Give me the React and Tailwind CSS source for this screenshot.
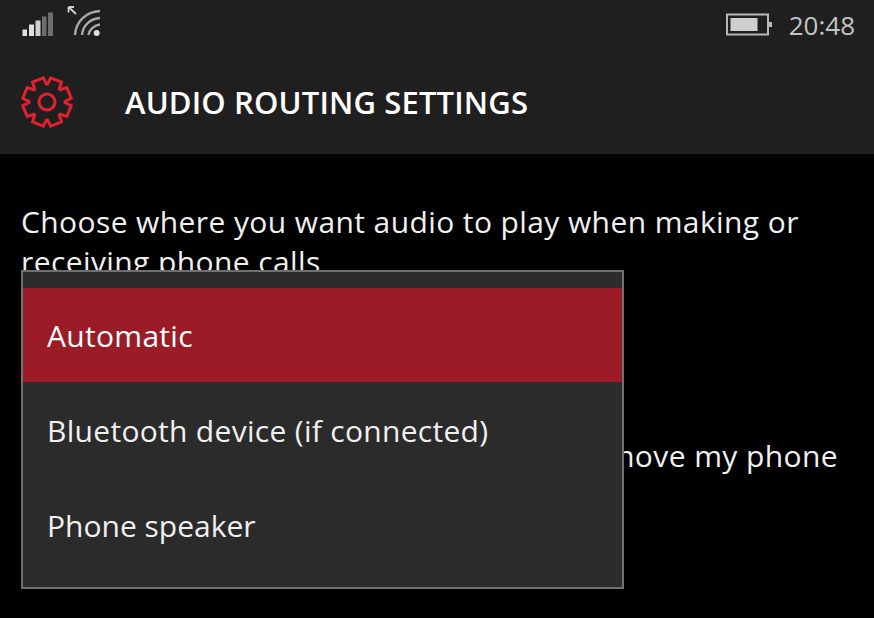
const font = { fontFamily: '"Open Sans", "Noto Sans", sans-serif' };

function SignalIcon() {
  return (
    <svg width="32" height="26" viewBox="0 0 32 26">
      <rect x="0.5" y="17.5" width="4.5" height="6.5" fill="#e0e0e0" />
      <rect x="7" y="12.5" width="5" height="11.5" fill="#e0e0e0" />
      <rect x="13.5" y="8.5" width="5" height="15.5" fill="#cfcfcf" />
      <rect x="20" y="4.5" width="4.5" height="19.5" fill="#6e6e6e" />
      <rect x="26" y="0.5" width="5" height="23.5" fill="#6e6e6e" />
    </svg>
  );
}

function WifiIcon() {
  return (
    <svg width="38" height="34" viewBox="0 0 38 34" fill="none" stroke="#a8a8a8" strokeWidth="2.4">
      <path d="M2.5 2l7.5 7M2.5 2h5.5M2.5 2v5.5" stroke="#d0d0d0" strokeWidth="1.8" />
      <path d="M9 30C10 16 20 7 34 6" />
      <path d="M16 30C16.5 21 24 13.5 34 13" />
      <path d="M22.5 30C23 25 28 20 34 19.5" />
      <circle cx="30.7" cy="28" r="3" fill="#e0e0e0" stroke="none" />
    </svg>
  );
}

function BatteryIcon() {
  return (
    <svg width="46" height="24" viewBox="0 0 46 24" fill="none">
      <rect x="1" y="1.5" width="41" height="20" stroke="#b8b8b8" strokeWidth="2" />
      <rect x="4.5" y="5" width="27" height="13" fill="#cfcfcf" />
      <rect x="43" y="9" width="3" height="5" fill="#b8b8b8" />
    </svg>
  );
}

function GearIcon() {
  // 8 teeth, outline only
  const pts = [];
  for (let i = 0; i < 8; i++) {
    const a = (i * Math.PI) / 4 - Math.PI / 2 - Math.PI / 8;
    const p = (r, d) => `${(27 + r * Math.cos(a + d)).toFixed(1)},${(27 + r * Math.sin(a + d)).toFixed(1)}`;
    pts.push(p(18, -0.36), p(24.5, -0.24), p(24.5, 0.24), p(18, 0.36));
  }
  return (
    <svg width="54" height="54" viewBox="0 0 54 54" fill="none" stroke="#e3202f" strokeWidth="3" strokeLinejoin="miter">
      <polygon points={pts.join(" ")} />
      <circle cx="27" cy="27" r="8" />
    </svg>
  );
}

export default function App() {
  return (
    <div className="relative w-[874px] h-[618px] overflow-hidden bg-black text-white" style={font}>
      <header className="bg-[#1f1f1f] h-[154px] flex flex-col">
        <div className="h-[50px] flex justify-between">
          <div className="flex items-start">
            <div className="ml-[22px] mt-[12px]"><SignalIcon /></div>
            <div className="ml-[12px] mt-[5px]"><WifiIcon /></div>
          </div>
          <div className="flex items-start text-[#c4c4c4] text-[26px] leading-[50px] pr-[19px]">
            <div className="mt-[13px] mr-[17px]"><BatteryIcon /></div>
            <span>20:48</span>
          </div>
        </div>
        <div className="flex items-center h-[104px]">
          <div className="ml-[20px] mr-[51px]"><GearIcon /></div>
          <h1 className="text-[31px] font-semibold tracking-[0.15px] whitespace-nowrap">AUDIO ROUTING SETTINGS</h1>
        </div>
      </header>
      <main className="px-[21px] pt-[48px] text-[30px] tracking-[0.4px] leading-[40px] text-[#f0f0f0]">
        <p className="whitespace-nowrap">Choose where you want audio to play when making or</p>
        <p>receiving phone calls</p>
        <p className="mt-[154px] text-right pr-[15px] whitespace-nowrap">when I move my phone</p>
      </main>
      <div className="absolute left-[21px] top-[270px] w-[603px] h-[319px] bg-[#2b2b2b] border-2 border-[#707070] pt-[16px] text-[30px] tracking-[0.3px] text-[#f0f0f0]">
        <div className="h-[94px] px-[24px] flex items-center bg-[#9b1b27] text-white">Automatic</div>
        <div className="h-[95px] pt-[2px] px-[24px] flex items-center">Bluetooth device (if connected)</div>
        <div className="h-[95px] pt-[1px] px-[24px] flex items-center tracking-[0px]">Phone speaker</div>
      </div>
    </div>
  );
}
